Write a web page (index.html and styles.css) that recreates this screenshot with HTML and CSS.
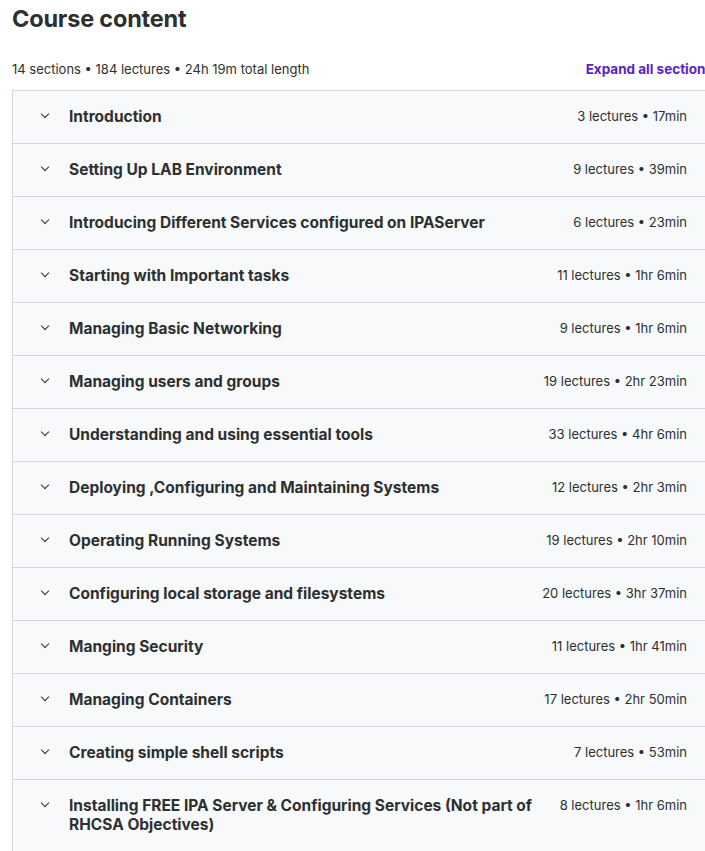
FILE: index.html
```html
<!doctype html>
<html>
<head>
<meta charset="utf-8">
<title>Course content</title>
<link rel="stylesheet" href="styles.css">
</head>
<body>
<div class="curriculum">
	<h2 class="title">Course content</h2>
	<div class="summary">
		<span>14 sections • 184 lectures • 24h 19m total length</span>
		<button class="expand">Expand all sections</button>
	</div>

	<ul class="sections">
		<li><i class="chev"></i><b>Introduction</b><span>3 lectures • 17min</span></li>
		<li><i class="chev"></i><b>Setting Up LAB Environment</b><span>9 lectures • 39min</span></li>
		<li><i class="chev"></i><b>Introducing Different Services configured on IPAServer</b><span>6 lectures • 23min</span></li>
		<li><i class="chev"></i><b>Starting with Important tasks</b><span>11 lectures • 1hr 6min</span></li>
		<li><i class="chev"></i><b>Managing Basic Networking</b><span>9 lectures • 1hr 6min</span></li>
		<li><i class="chev"></i><b>Managing users and groups</b><span>19 lectures • 2hr 23min</span></li>
		<li><i class="chev"></i><b>Understanding and using essential tools</b><span>33 lectures • 4hr 6min</span></li>
		<li><i class="chev"></i><b>Deploying ,Configuring and Maintaining Systems</b><span>12 lectures • 2hr 3min</span></li>
		<li><i class="chev"></i><b>Operating Running Systems</b><span>19 lectures • 2hr 10min</span></li>
		<li><i class="chev"></i><b>Configuring local storage and filesystems</b><span>20 lectures • 3hr 37min</span></li>
		<li><i class="chev"></i><b>Manging Security</b><span>11 lectures • 1hr 41min</span></li>
		<li><i class="chev"></i><b>Managing Containers</b><span>17 lectures • 2hr 50min</span></li>
		<li><i class="chev"></i><b>Creating simple shell scripts</b><span>7 lectures • 53min</span></li>
		<li><i class="chev"></i><b>Installing FREE IPA Server &amp; Configuring Services (Not part of RHCSA Objectives)</b><span>8 lectures • 1hr 6min</span></li>
	</ul>
</div>
</body>
</html>
```

FILE: styles.css
```css
*{ margin:0; padding:0; box-sizing:border-box}
ul{ list-style:none}
body{ font-family:Inter, "Noto Sans", sans-serif; color:#2d2f31; background:#fff; overflow:hidden}

.curriculum{ width:701px; margin-left:12px;}
.title{ font-size:23.5px; line-height:38px; font-weight:700; letter-spacing:-0.2px}
.summary{ display:flex; justify-content:space-between; align-items:center; margin-top:20px; height:23px; font-size:13px; line-height:23px}
.expand{ border:0; background:none; font:inherit; font-size:13.5px; font-weight:700; color:#5624d0; cursor:pointer; white-space:nowrap}

.sections{ margin-top:9px; border:1px solid #d1d7dc; border-bottom:0; border-right:0}
.sections li{ display:flex; align-items:flex-start; padding:16px 24px 17px 24px; background:#f7f9fa; border-bottom:1px solid #d1d7dc; cursor:pointer}
.sections li b{ flex:1; font-size:15.5px; line-height:19px; font-weight:700; padding-right:8px}
.sections li span{ font-size:13px; line-height:19px; white-space:nowrap; margin-right:2px}
.chev{ width:16px; height:19px; margin-right:16px; position:relative; flex:none}
.chev::before{ content:""; position:absolute; left:5px; top:4px; width:5px; height:5px; border-right:1.5px solid #2d2f31; border-bottom:1.5px solid #2d2f31; transform:rotate(45deg)}
```
